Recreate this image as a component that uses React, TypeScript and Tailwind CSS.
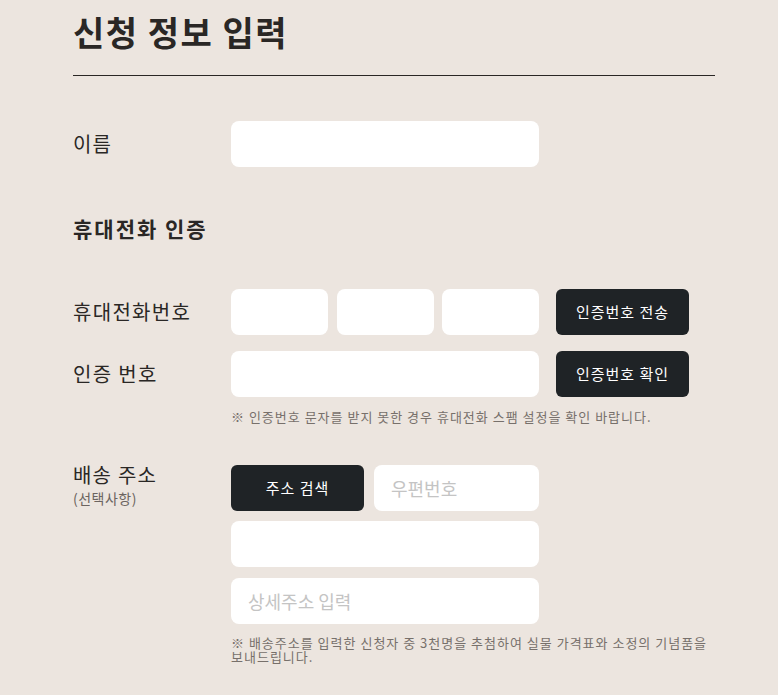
import React from 'react'

const font = { fontFamily: '"Noto Sans CJK KR", "Noto Sans", sans-serif' }

function Field({ placeholder, className = '' }: { placeholder?: string; className?: string }) {
  return (
    <input
      placeholder={placeholder}
      className={`h-[46px] min-w-0 rounded-lg bg-white px-[17px] text-[18px] text-[#333] outline-none placeholder:text-[#c4c4c4] ${className}`}
    />
  )
}

function DarkButton({ children, className = '' }: { children: React.ReactNode; className?: string }) {
  return (
    <button className={`flex h-[46px] w-[133px] items-center justify-center rounded-md bg-[#1f2326] text-[15px] tracking-[1px] text-white ${className}`}>
      {children}
    </button>
  )
}

export default function App() {
  return (
    <div className="min-h-[695px] bg-[#ece5df] text-[#2a2725]" style={font}>
      <div className="ml-[73px] w-[642px] pt-[7px]">
        <h1 className="text-[34px] font-bold leading-[50px] tracking-[1.5px]">신청 정보 입력</h1>
        <div className="mt-[18px] h-px bg-[#2a2725]" />

        {/* 이름 */}
        <div className="mt-[45px] flex items-center">
          <label className="w-[158px] text-[20px] leading-none tracking-[1px]">이름</label>
          <Field className="w-[308px]" />
        </div>

        <h2 className="mt-[46px] text-[21px] font-bold leading-[30px] tracking-[2px]">휴대전화 인증</h2>

        {/* 휴대전화번호 */}
        <div className="mt-[46px] flex items-center">
          <label className="w-[158px] text-[20px] leading-none tracking-[1.3px]">휴대전화번호</label>
          <div className="flex w-[308px] gap-[8.5px]">
            <Field className="flex-1" />
            <Field className="flex-1" />
            <Field className="flex-1" />
          </div>
          <DarkButton className="ml-[17px]">인증번호 전송</DarkButton>
        </div>

        {/* 인증 번호 */}
        <div className="mt-[16px] flex items-center">
          <label className="w-[158px] text-[20px] leading-none tracking-[1.3px]">인증 번호</label>
          <Field className="w-[308px]" />
          <DarkButton className="ml-[17px]">인증번호 확인</DarkButton>
        </div>
        <p className="ml-[158px] mt-[12px] text-[13px] leading-[16px] tracking-[1px] text-[#77706b]">
          ※ 인증번호 문자를 받지 못한 경우 휴대전화 스팸 설정을 확인 바랍니다.
        </p>

        {/* 배송 주소 */}
        <div className="mt-[40px] flex items-start">
          <div className="w-[158px]">
            <div className="text-[20px] leading-[20px] tracking-[1.2px]">배송 주소</div>
            <div className="mt-[5px] text-[14px] leading-[16px] tracking-[0.5px] text-[#6b6460]">(선택사항)</div>
          </div>
          <div className="flex flex-1 flex-col">
            <div className="flex gap-[10px]">
              <DarkButton>주소 검색</DarkButton>
              <Field className="w-[165px]" placeholder="우편번호" />
            </div>
            <Field className="mt-[10px] w-[308px]" />
            <Field className="mt-[11px] w-[308px]" placeholder="상세주소 입력" />
            <p className="mt-[12px] text-[13px] leading-[14px] tracking-[1px] text-[#77706b]">
              ※ 배송주소를 입력한 신청자 중 3천명을 추첨하여 실물 가격표와 소정의 기념품을 보내드립니다.
            </p>
          </div>
        </div>
      </div>
    </div>
  )
}
